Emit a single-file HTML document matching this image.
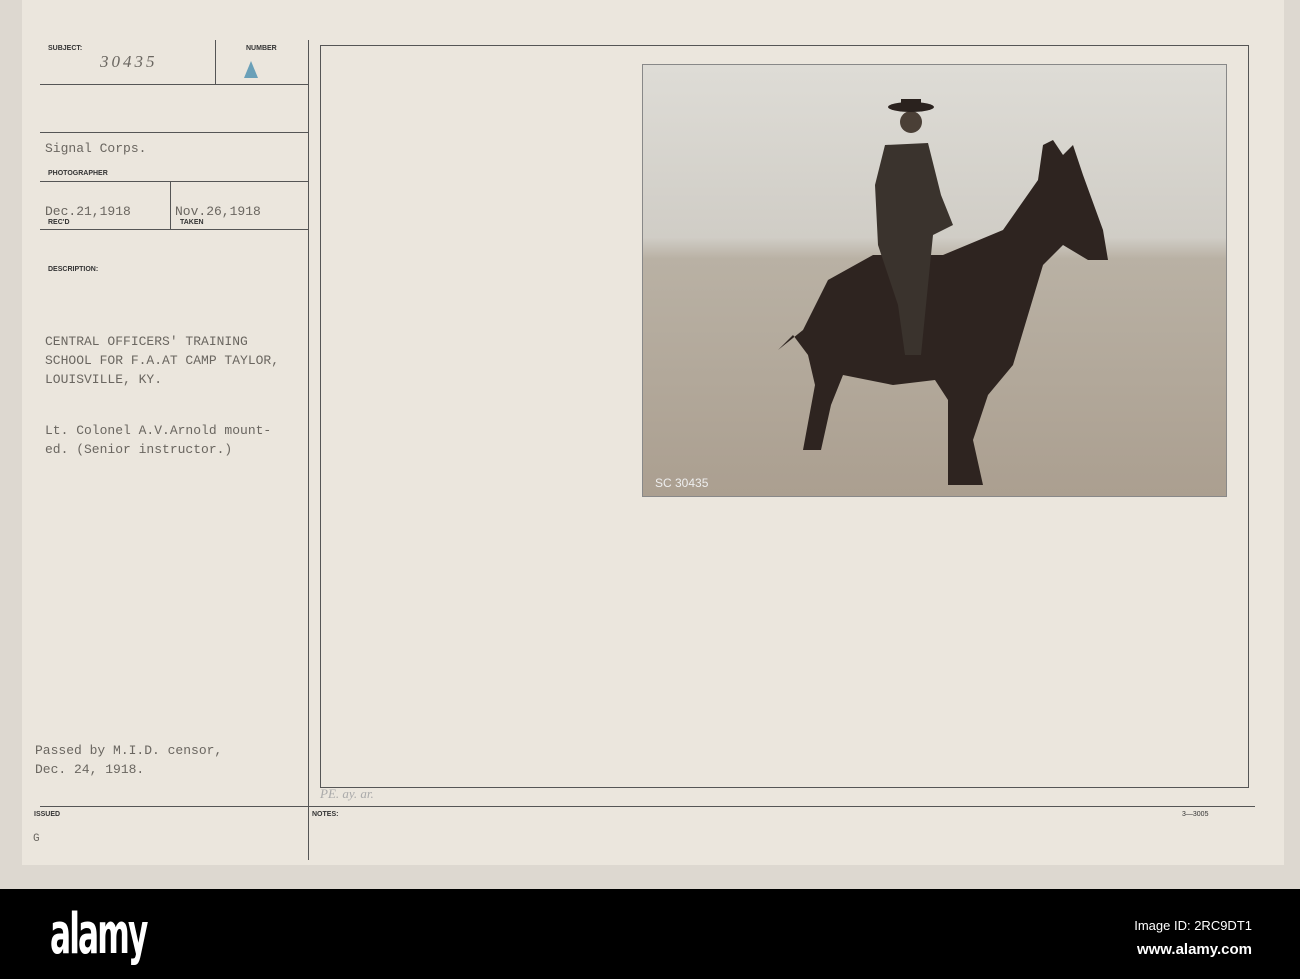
<!DOCTYPE html>
<html><head><style>
body{margin:0;width:1300px;height:979px;position:relative;overflow:hidden;background:#ddd8d0;font-family:"Liberation Mono",monospace;}
.card{position:absolute;left:22px;top:0;width:1262px;height:865px;background:#ebe6dd;}
.l{position:absolute;background:#555;}
.t{position:absolute;color:#6a6660;font-size:13px;white-space:pre;}
.s{position:absolute;font-family:"Liberation Sans",sans-serif;font-weight:bold;font-size:7px;color:#333;}
.bar{position:absolute;left:0;top:889px;width:1300px;height:90px;background:#000;}
</style></head><body>
<div class="card"></div>
<div class="l" style="left:40px;top:84px;width:268px;height:1px"></div>
<div class="l" style="left:215px;top:40px;width:1px;height:44px"></div>
<div class="l" style="left:40px;top:132px;width:268px;height:1px"></div>
<div class="l" style="left:40px;top:181px;width:268px;height:1px"></div>
<div class="l" style="left:170px;top:181px;width:1px;height:48px"></div>
<div class="l" style="left:40px;top:229px;width:268px;height:1px"></div>
<div class="l" style="left:308px;top:40px;width:1px;height:820px"></div>
<div class="l" style="left:320px;top:45px;width:928px;height:1px"></div>
<div class="l" style="left:320px;top:45px;width:1px;height:742px"></div>
<div class="l" style="left:1248px;top:45px;width:1px;height:742px"></div>
<div class="l" style="left:320px;top:787px;width:929px;height:1px"></div>
<div class="l" style="left:40px;top:806px;width:1215px;height:1px"></div>
<div class="s" style="left:48px;top:45px">SUBJECT:</div>
<div class="s" style="left:246px;top:45px">NUMBER</div>
<div class="t" style="left:100px;top:52px;font-family:'Liberation Serif',serif;font-style:italic;font-size:17px;letter-spacing:3px">30435</div>
<div style="position:absolute;left:244px;top:61px;width:14px;height:17px;background:#6aa0b8;clip-path:polygon(50% 0,100% 100%,0 100%)"></div>
<div class="t" style="left:45px;top:141px">Signal Corps.</div>
<div class="s" style="left:48px;top:170px">PHOTOGRAPHER</div>
<div class="t" style="left:45px;top:204px">Dec.21,1918</div>
<div class="s" style="left:48px;top:219px">REC'D</div>
<div class="t" style="left:175px;top:204px">Nov.26,1918</div>
<div class="s" style="left:180px;top:219px">TAKEN</div>
<div class="s" style="left:48px;top:266px">DESCRIPTION:</div>
<div class="t" style="left:45px;top:332px;line-height:19px">CENTRAL OFFICERS' TRAINING
SCHOOL FOR F.A.AT CAMP TAYLOR,
LOUISVILLE, KY.</div>
<div class="t" style="left:45px;top:421px;line-height:19px">Lt. Colonel A.V.Arnold mount-
ed. (Senior instructor.)</div>
<div class="t" style="left:35px;top:741px;line-height:19px">Passed by M.I.D. censor,
Dec. 24, 1918.</div>
<div class="s" style="left:34px;top:811px">ISSUED</div>
<div class="t" style="left:33px;top:833px;font-size:11px">G</div>
<div class="s" style="left:312px;top:811px">NOTES:</div>
<div class="t" style="left:320px;top:786px;font-family:'Liberation Serif',serif;font-style:italic;color:#aaa">PE. ay. ar.</div>
<div class="s" style="left:1182px;top:811px;font-weight:normal">3—3005</div>
<div style="position:absolute;left:643px;top:65px;width:583px;height:431px;background:linear-gradient(#dedcd6 0%,#d0cdc6 40%,#b9b1a4 45%,#ab9f90 100%);outline:1px solid #888;overflow:hidden">
<svg width="583" height="431" viewBox="0 0 583 431">
<path d="M150 270 L135 285 L160 265 L185 215 L230 190 L300 190 L360 165 L395 115 L400 80 L410 75 L420 90 L430 80 L440 110 L460 165 L465 195 L445 195 L420 180 L400 200 L385 250 L370 300 L345 330 L330 375 L340 420 L305 420 L305 335 L292 315 L250 320 L200 310 L188 340 L178 385 L160 385 L172 320 L165 290 Z" fill="#2e2420"/>
<path d="M242 80 L285 78 L298 130 L310 160 L290 170 L285 220 L278 290 L262 290 L255 240 L235 180 L232 120 Z" fill="#3a332d"/>
<circle cx="268" cy="57" r="11" fill="#4a3f36"/>
<ellipse cx="268" cy="42" rx="23" ry="5" fill="#2a221e"/>
<rect x="258" y="34" width="20" height="9" fill="#2a221e"/>
<text x="12" y="422" font-size="12" fill="#eee" font-family="Liberation Sans">SC 30435</text>
</svg></div>
<div class="bar"></div>
<div style="position:absolute;left:50px;top:902px;color:#fff;font-family:'DejaVu Sans Condensed','Liberation Sans Narrow',sans-serif;font-weight:bold;font-size:56px;letter-spacing:-3px;transform:scaleX(0.62);transform-origin:left">alamy</div>
<div style="position:absolute;right:48px;top:914px;color:#fff;font-family:'Liberation Sans Narrow','Liberation Sans',sans-serif;font-size:13px;text-align:right;line-height:24px">Image ID: 2RC9DT1<br><b style="font-size:15px">www.alamy.com</b></div>
</body></html>
